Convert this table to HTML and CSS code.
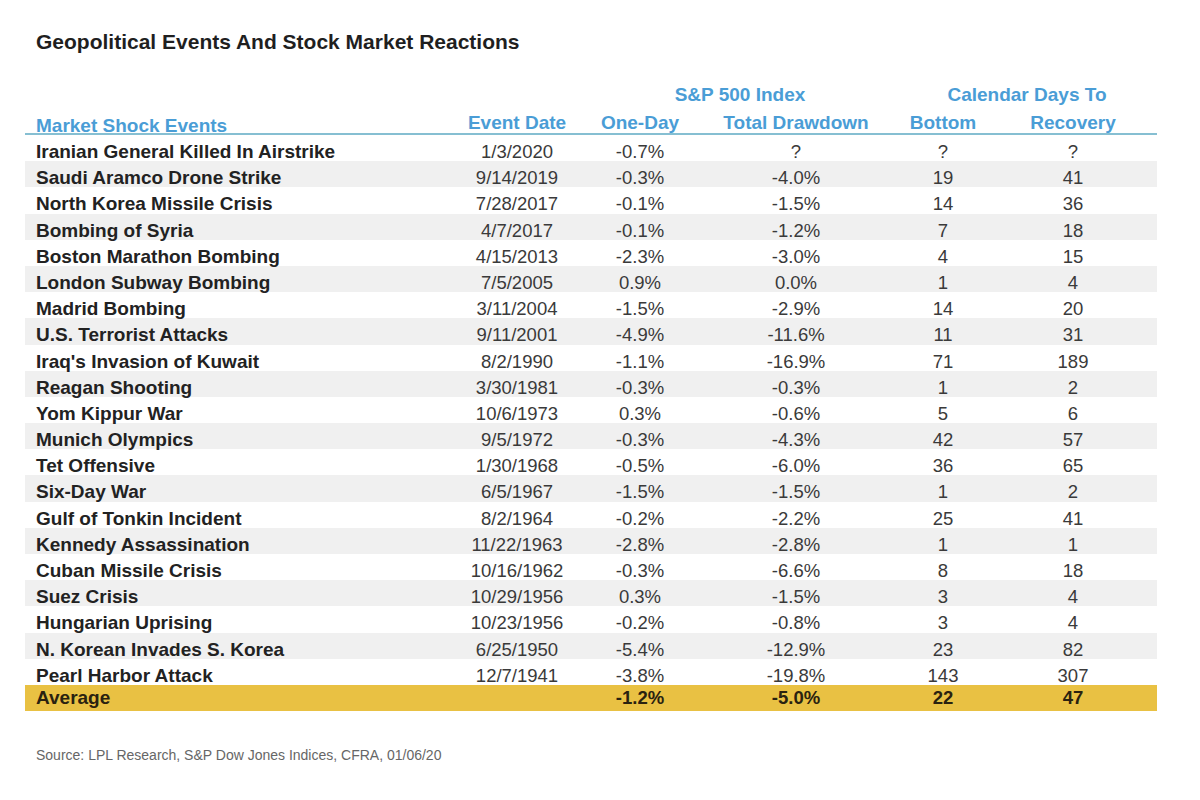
FILE: index.html
```html
<!DOCTYPE html>
<html>
<head>
<meta charset="utf-8">
<link rel="stylesheet" href="styles.css">
</head>
<body>
<div class="page">
  <h1 class="title">Geopolitical Events And Stock Market Reactions</h1>
  <div class="table">
    <div class="group-row">
      <span class="g-sp">S&amp;P 500 Index</span>
      <span class="g-cal">Calendar Days To</span>
    </div>
    <div class="head-row">
      <span class="c-name h-name">Market Shock Events</span>
      <span>Event Date</span>
      <span>One-Day</span>
      <span>Total Drawdown</span>
      <span>Bottom</span>
      <span>Recovery</span>
    </div>
    <div class="row"><span class="c-name">Iranian General Killed In Airstrike</span><span>1/3/2020</span><span>-0.7%</span><span>?</span><span>?</span><span>?</span></div>
    <div class="row"><span class="c-name">Saudi Aramco Drone Strike</span><span>9/14/2019</span><span>-0.3%</span><span>-4.0%</span><span>19</span><span>41</span></div>
    <div class="row"><span class="c-name">North Korea Missile Crisis</span><span>7/28/2017</span><span>-0.1%</span><span>-1.5%</span><span>14</span><span>36</span></div>
    <div class="row"><span class="c-name">Bombing of Syria</span><span>4/7/2017</span><span>-0.1%</span><span>-1.2%</span><span>7</span><span>18</span></div>
    <div class="row"><span class="c-name">Boston Marathon Bombing</span><span>4/15/2013</span><span>-2.3%</span><span>-3.0%</span><span>4</span><span>15</span></div>
    <div class="row"><span class="c-name">London Subway Bombing</span><span>7/5/2005</span><span>0.9%</span><span>0.0%</span><span>1</span><span>4</span></div>
    <div class="row"><span class="c-name">Madrid Bombing</span><span>3/11/2004</span><span>-1.5%</span><span>-2.9%</span><span>14</span><span>20</span></div>
    <div class="row"><span class="c-name">U.S. Terrorist Attacks</span><span>9/11/2001</span><span>-4.9%</span><span>-11.6%</span><span>11</span><span>31</span></div>
    <div class="row"><span class="c-name">Iraq's Invasion of Kuwait</span><span>8/2/1990</span><span>-1.1%</span><span>-16.9%</span><span>71</span><span>189</span></div>
    <div class="row"><span class="c-name">Reagan Shooting</span><span>3/30/1981</span><span>-0.3%</span><span>-0.3%</span><span>1</span><span>2</span></div>
    <div class="row"><span class="c-name">Yom Kippur War</span><span>10/6/1973</span><span>0.3%</span><span>-0.6%</span><span>5</span><span>6</span></div>
    <div class="row"><span class="c-name">Munich Olympics</span><span>9/5/1972</span><span>-0.3%</span><span>-4.3%</span><span>42</span><span>57</span></div>
    <div class="row"><span class="c-name">Tet Offensive</span><span>1/30/1968</span><span>-0.5%</span><span>-6.0%</span><span>36</span><span>65</span></div>
    <div class="row"><span class="c-name">Six-Day War</span><span>6/5/1967</span><span>-1.5%</span><span>-1.5%</span><span>1</span><span>2</span></div>
    <div class="row"><span class="c-name">Gulf of Tonkin Incident</span><span>8/2/1964</span><span>-0.2%</span><span>-2.2%</span><span>25</span><span>41</span></div>
    <div class="row"><span class="c-name">Kennedy Assassination</span><span>11/22/1963</span><span>-2.8%</span><span>-2.8%</span><span>1</span><span>1</span></div>
    <div class="row"><span class="c-name">Cuban Missile Crisis</span><span>10/16/1962</span><span>-0.3%</span><span>-6.6%</span><span>8</span><span>18</span></div>
    <div class="row"><span class="c-name">Suez Crisis</span><span>10/29/1956</span><span>0.3%</span><span>-1.5%</span><span>3</span><span>4</span></div>
    <div class="row"><span class="c-name">Hungarian Uprising</span><span>10/23/1956</span><span>-0.2%</span><span>-0.8%</span><span>3</span><span>4</span></div>
    <div class="row"><span class="c-name">N. Korean Invades S. Korea</span><span>6/25/1950</span><span>-5.4%</span><span>-12.9%</span><span>23</span><span>82</span></div>
    <div class="row"><span class="c-name">Pearl Harbor Attack</span><span>12/7/1941</span><span>-3.8%</span><span>-19.8%</span><span>143</span><span>307</span></div>
    <div class="avg-row"><span class="c-name">Average</span><span></span><span>-1.2%</span><span>-5.0%</span><span>22</span><span>47</span></div>
  </div>
  <p class="source">Source: LPL Research, S&amp;P Dow Jones Indices, CFRA, 01/06/20</p>
</div>
</body>
</html>
```

FILE: styles.css
```css
html, body {
  margin: 0;
  padding: 0;
  background: #ffffff;
}

.page {
  padding: 30px 0 0 25px;
  font-family: "Liberation Sans", Arial, sans-serif;
  color: #333333;
}

.title {
  margin: 0 0 0 11px;
  font-size: 21px;
  line-height: 24px;
  font-weight: bold;
  color: #1f1f1f;
}

.table {
  width: 1132px;
  margin-top: 28px;
}

.group-row,
.head-row,
.row,
.avg-row {
  display: grid;
  grid-template-columns: 430px 124px 122px 190px 104px 156px;
  align-items: center;
  text-align: center;
}

.group-row {
  height: 26px;
  font-size: 19px;
  font-weight: bold;
  color: #4a9dd6;
}

.g-sp {
  grid-column: 3 / 5;
  padding-left: 10px;
}

.g-cal {
  grid-column: 5 / 7;
  padding-left: 12px;
}

.head-row {
  height: 27px;
  box-sizing: border-box;
  border-bottom: 2px solid #86bfd2;
  font-size: 19px;
  font-weight: bold;
  color: #4a9dd6;
}

.c-name {
  text-align: left;
  padding-left: 11px;
}

.head-row .h-name {
  padding-top: 7px;
}

.row {
  height: 26.2px;
  box-sizing: border-box;
  padding-top: 6px;
  font-size: 18.5px;
  color: #3a3a3a;
}

.row:nth-child(even) {
  background: #f0f0f0;
}

.row .c-name {
  font-size: 19px;
  font-weight: bold;
  color: #222222;
}

.avg-row {
  height: 26.2px;
  background: #e9c143;
  font-size: 18.5px;
  font-weight: bold;
  color: #2a2210;
}

.avg-row .c-name {
  font-size: 19px;
}

.source {
  margin: 36px 0 0 11px;
  font-size: 14px;
  line-height: 16px;
  color: #666666;
}
```
